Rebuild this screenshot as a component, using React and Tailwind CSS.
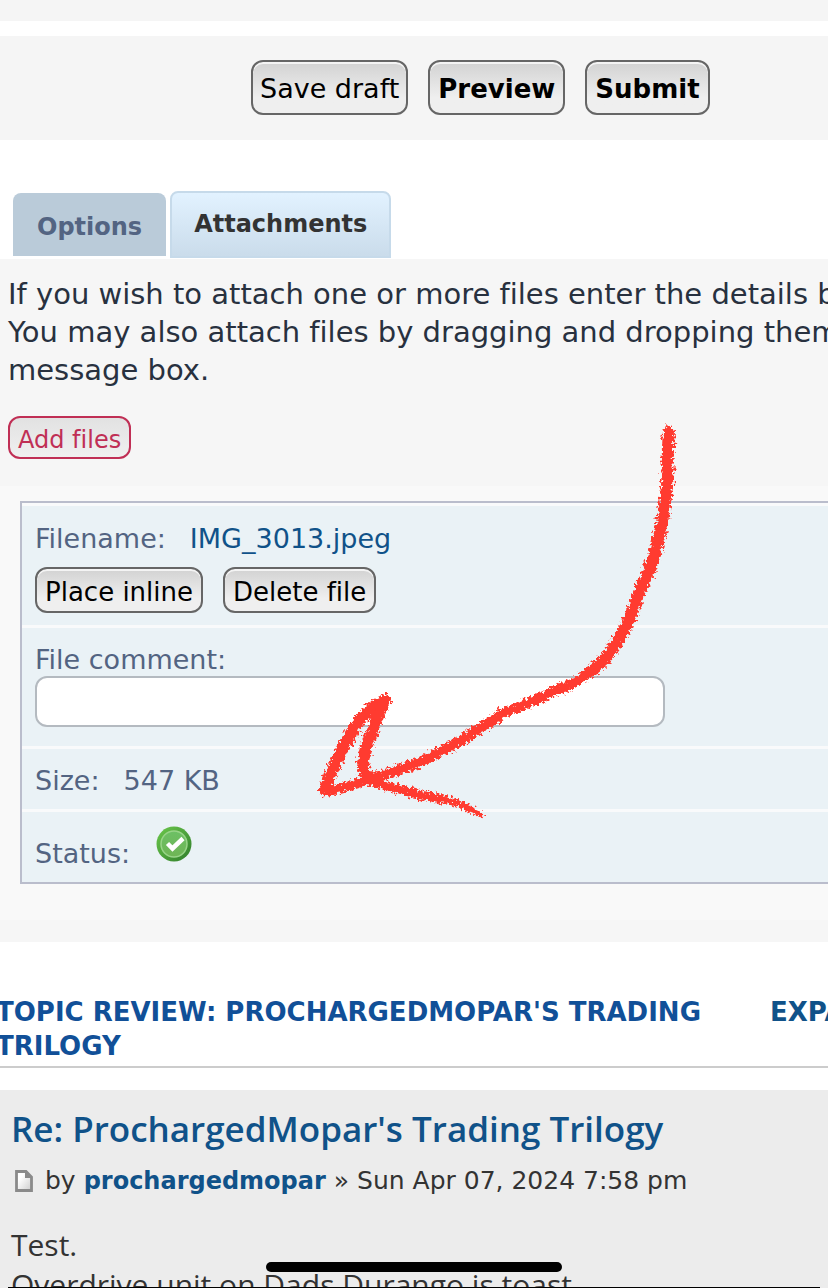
import clsx from 'clsx'

function FormButton({ className, children }) {
  return (
    <button
      type="button"
      className={clsx(
        'rounded-xl border-2 border-[#666666] bg-linear-to-b from-[#d2d2d2] to-[#efefef] to-70% pt-1 text-black shadow-[inset_0_2px_0_#f4f4f4]',
        className
      )}
    >
      {children}
    </button>
  )
}

function CheckIcon() {
  return (
    <svg viewBox="0 0 36 36" className="h-9 w-9" role="img" aria-label="Uploaded">
      <defs>
        <linearGradient id="rim" x1="0" y1="0" x2="1" y2="1">
          <stop offset="0" stopColor="#6cc94c" />
          <stop offset="1" stopColor="#2f7d2b" />
        </linearGradient>
        <linearGradient id="disc" x1="0" y1="0" x2="0" y2="1">
          <stop offset="0" stopColor="#6cc065" />
          <stop offset="1" stopColor="#6fb555" />
        </linearGradient>
      </defs>
      <circle cx="18" cy="18" r="17.500" fill="url(#rim)" />
      <circle cx="18" cy="18" r="13" fill="url(#disc)" stroke="#98d488" strokeWidth="1.500" />
      <path d="M11.500 17.500l5 5L27 12.500" fill="none" stroke="#ffffff" strokeWidth="4.500" />
    </svg>
  )
}

function PageIcon() {
  return (
    <svg viewBox="0 0 18 22" className="h-[22px] w-[18px]" aria-hidden="true">
      <defs>
        <linearGradient id="sheet" x1="0" y1="0" x2="1" y2="1">
          <stop offset="0.300" stopColor="#ffffff" />
          <stop offset="1" stopColor="#cccccc" />
        </linearGradient>
      </defs>
      <path d="M1.500 1.500h9.500l5.500 5.500v13.500h-15z" fill="url(#sheet)" stroke="#8a8a8a" strokeWidth="2.800" />
      <path d="M10 1v7H17z" fill="#8a8a8a" />
    </svg>
  )
}

// Crayon arrow drawn over the attachment list
function CrayonArrow() {
  return (
    <svg
      viewBox="310 420 380 410"
      className="pointer-events-none absolute top-[420px] left-[310px] h-[410px] w-[380px]"
      aria-hidden="true"
    >
      <defs>
        <filter
          id="crayon"
          filterUnits="userSpaceOnUse"
          x="310"
          y="420"
          width="380"
          height="410"
          colorInterpolationFilters="sRGB"
        >
          <feTurbulence type="fractalNoise" baseFrequency="0.350" numOctaves="3" seed="4" result="grain" />
          <feDisplacementMap in="SourceGraphic" in2="grain" scale="10" xChannelSelector="R" yChannelSelector="G" />
          <feGaussianBlur stdDeviation="0.500" />
        </filter>
      </defs>
      <g filter="url(#crayon)" fill="none" stroke="#ff3b30" strokeLinecap="round" strokeLinejoin="round">
        <path d="M669 432C667 452 668 470 667 487C665 510 661 532 655 553C651 568 646 578 640 590C634 608 628 624 620 637C612 652 602 664 590 672" strokeWidth="12" />
        <path d="M590 672C580 680 569 686 557 690C540 698 522 706 503 713C495 719 488 724 480 728C468 737 456 744 443 750C431 757 419 763 407 767C393 772 380 776 368 780" strokeWidth="10" />
        <path d="M368 780C352 785 338 790 326 791" strokeWidth="9" />
        <path d="M325 790C328 779 332 769 337 760C342 749 348 739 353 730C360 719 368 710 377 704L385 700" strokeWidth="12" />
        <path d="M385 700C380 711 375 722 372 733C367 743 364 752 363 763L366 777" strokeWidth="12" />
        <path d="M368 780C380 784 392 788 403 790C417 795 430 797 443 799" strokeWidth="9" />
        <path d="M443 799C453 801 463 805 470 809" strokeWidth="7" />
        <path d="M470 809L481 815" strokeWidth="5" />
      </g>
    </svg>
  )
}

function App() {
  return (
    <main className="relative h-screen overflow-hidden bg-white font-['DejaVu_Sans',Verdana,sans-serif] [font-variant-ligatures:none]">
      <div className="h-[21px] bg-[#f5f5f5]" />

      <div className="mt-[15px] flex h-[104px] items-start gap-5 bg-[#f5f5f5] pt-6 pl-[251px]">
        <FormButton className="h-[55px] px-[7px] text-[27px]">Save draft</FormButton>
        <FormButton className="h-[55px] px-2 text-[26px] font-bold">Preview</FormButton>
        <FormButton className="h-[55px] px-2 text-[26px] font-bold">Submit</FormButton>
      </div>

      <nav className="mt-[51px] flex h-[68px] items-start gap-1 pl-[13px] text-2xl font-bold">
        <a href="#options" className="mt-[2px] h-[63px] rounded-t-lg bg-[#bacbd9] px-6 pt-[18px] text-[#536482]">
          Options
        </a>
        <a
          href="#attachments"
          className="h-[67px] rounded-t-lg border-2 border-[#c6daea] bg-linear-to-b from-[#e2f2ff] to-[#cadceb] px-[22px] pt-[15px] text-[#333333]"
        >
          Attachments
        </a>
      </nav>

      <section className="bg-[#f6f6f6] pb-[22px]">
        <p className="pt-4 pl-2 text-[29px] leading-[38px] whitespace-nowrap text-[#28313f]">
          If you wish to attach one or more files enter the details below.
          <br />
          You may also attach files by dragging and dropping them in the
          <br />
          message box.
        </p>

        <button
          type="button"
          className="mt-[27px] ml-2 block h-[43px] rounded-xl border-2 border-[#c02f55] bg-linear-to-b from-[#e2e2e2] to-[#f0f0f0] px-2 pt-1 text-2xl text-[#c02f55]"
        >
          Add files
        </button>

        <div className="mt-[27px] bg-[#f9f9f9] pt-[15px] pb-9 pl-5">
          <div className="divide-y-3 divide-[#f9fafb] border-y-2 border-l-2 border-[#babdcc] bg-[#eaf2f6] text-[27px] text-[#536482]">
            <div className="h-[125px] border-t-3 border-[#f9fafb] pt-[17px] pl-[13px]">
              <div className="flex gap-6 leading-[32px]">
                <span>Filename:</span>
                <a href="#file" className="text-[#105289]">
                  IMG_3013.jpeg
                </a>
              </div>
              <div className="mt-3 flex gap-5 text-[26px]">
                <FormButton className="h-[46px] px-2">Place inline</FormButton>
                <FormButton className="h-[46px] px-2">Delete file</FormButton>
              </div>
            </div>
            <div className="h-[121px] pt-4 pl-[13px]">
              <label htmlFor="comment" className="block leading-[32px]">
                File comment:
              </label>
              <input
                id="comment"
                type="text"
                className="block h-[51px] w-[630px] rounded-xl border-2 border-[#b4bac0] bg-white px-2 outline-none"
              />
            </div>
            <div className="flex h-[63px] gap-6 pt-4 pl-[13px] leading-[32px]">
              <span>Size:</span>
              <span>547 KB</span>
            </div>
            <div className="flex h-[70px] gap-[26px] pt-[14px] pl-[13px] leading-[32px]">
              <span className="pt-3">Status:</span>
              <CheckIcon />
            </div>
          </div>
        </div>
      </section>

      <header className="mt-[53px] flex items-start border-b-2 border-[#cccccc] pb-[3px] text-[26px] leading-[34px] font-bold whitespace-nowrap uppercase">
        <h2 className="-ml-1 w-[774px] shrink-0 text-[#115098]">
          Topic review: ProchargedMopar's Trading
          <br />
          Trilogy
        </h2>
        <a href="#review" className="text-[#105289]">
          Expand view
        </a>
      </header>

      <article className="mt-[22px] bg-[#ececec] pt-[18px] pb-8 pl-[11px] text-[#333333]">
        <h3 className="font-['Open_Sans',sans-serif] text-[35px] leading-[42px] font-semibold">
          <a href="#post" className="text-[#105289]">
            Re: ProchargedMopar's Trading Trilogy
          </a>
        </h3>
        <p className="mt-[14px] flex items-center gap-3 pl-1 text-[25px] leading-[34px] whitespace-nowrap">
          <PageIcon />
          <span>
            by{' '}
            <a href="#author" className="text-2xl leading-[34px] font-bold text-[#105289]">
              prochargedmopar
            </a>{' '}
            » Sun Apr 07, 2024 7:58 pm
          </span>
        </p>
        <p className="mt-[27px] font-['Open_Sans',sans-serif] text-[30px] leading-[40px] whitespace-nowrap">
          Test.
          <br />
          Overdrive unit on Dads Durango is toast
        </p>
      </article>

      <CrayonArrow />
      <div className="absolute bottom-4 left-1/2 h-[10px] w-[296px] -translate-x-1/2 rounded-full bg-black" />
      <div className="absolute inset-x-2 bottom-0 h-px bg-black" />
    </main>
  )
}

export default App
